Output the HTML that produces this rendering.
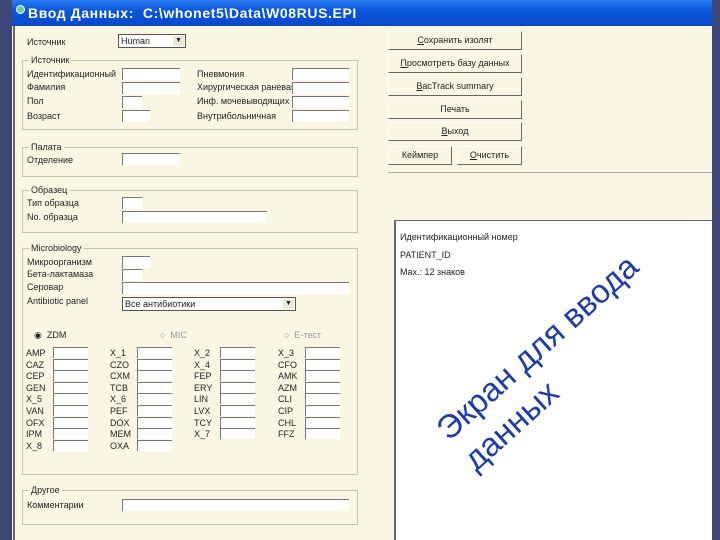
<!DOCTYPE html>
<html><head><meta charset="utf-8"><style>
*{margin:0;padding:0;box-sizing:border-box}
body{width:720px;height:540px;overflow:hidden;background:#3b4676;position:relative;font-family:"Liberation Sans","DejaVu Sans",sans-serif;font-size:9px;color:#222}
.a{position:absolute}
.win{left:12px;top:0;width:700px;height:540px;background:#fbf6e3}
.title{left:12px;top:0;width:700px;height:26px;background:linear-gradient(#2a7bf0,#0a56dc 40%,#0848c8);color:#fff;font-weight:bold;font-size:14px;letter-spacing:0.6px;line-height:26px;padding-left:16px}
.lbl{position:absolute;white-space:nowrap;line-height:10px}
.in{position:absolute;height:12px;background:#fff;border-top:1px solid #777;border-left:1px solid #777}
.grp{position:absolute;border:1px solid #c8c3ad}
.gt{position:absolute;top:-6px;left:6px;background:#fbf6e3;padding:0 2px;line-height:10px}
.btn{position:absolute;height:19px;background:#fbf6e3;border-right:1px solid #666;border-bottom:1px solid #666;border-top:1px solid #fff;border-left:1px solid #fff;text-align:center;line-height:17px;font-size:9px}
</style></head><body>
<div class="a win"></div>
<div class="a" style="left:13px;top:26px;width:2px;height:514px;background:#666"></div>
<div class="a title">Ввод Данных:&nbsp; C:\whonet5\Data\W08RUS.EPI</div>
<div class="a" style="left:16px;top:5px;width:9px;height:9px;border-radius:50%;background:#6c9;border:1px solid #fff"></div>

<div class="lbl" style="left:27px;top:37px">Источник</div>
<div class="in" style="left:118px;top:34px;width:68px;height:14px;border:1px solid #555;padding-left:2px;line-height:12px">Human<span style="position:absolute;right:1px;top:1px;width:11px;height:10px;background:#ece8d8;font-size:7px;text-align:center;line-height:10px">▼</span></div>

<div class="grp" style="left:22px;top:60px;width:336px;height:70px"><span class="gt">Источник</span></div>
<div class="lbl" style="left:27px;top:69px">Идентификационный</div>
<div class="lbl" style="left:27px;top:82px">Фамилия</div>
<div class="lbl" style="left:27px;top:96px">Пол</div>
<div class="lbl" style="left:27px;top:111px">Возраст</div>
<div class="in" style="left:122px;top:68px;width:58px"></div>
<div class="in" style="left:122px;top:82px;width:58px"></div>
<div class="in" style="left:122px;top:96px;width:20px"></div>
<div class="in" style="left:122px;top:110px;width:28px"></div>
<div class="lbl" style="left:197px;top:69px">Пневмония</div>
<div class="lbl" style="left:197px;top:82px">Хирургическая раневая</div>
<div class="lbl" style="left:197px;top:96px">Инф. мочевыводящих</div>
<div class="lbl" style="left:197px;top:111px">Внутрибольничная</div>
<div class="in" style="left:292px;top:68px;width:57px"></div>
<div class="in" style="left:292px;top:82px;width:57px"></div>
<div class="in" style="left:292px;top:96px;width:57px"></div>
<div class="in" style="left:292px;top:110px;width:57px"></div>

<div class="grp" style="left:22px;top:147px;width:336px;height:30px"><span class="gt">Палата</span></div>
<div class="lbl" style="left:27px;top:155px">Отделение</div>
<div class="in" style="left:122px;top:153px;width:58px"></div>

<div class="grp" style="left:22px;top:190px;width:336px;height:43px"><span class="gt">Образец</span></div>
<div class="lbl" style="left:27px;top:198px">Тип образца</div>
<div class="lbl" style="left:27px;top:212px">No. образца</div>
<div class="in" style="left:122px;top:197px;width:20px"></div>
<div class="in" style="left:122px;top:211px;width:145px"></div>

<div class="grp" style="left:22px;top:248px;width:336px;height:227px"><span class="gt">Microbiology</span></div>
<div class="lbl" style="left:27px;top:257px">Микроорганизм</div>
<div class="lbl" style="left:27px;top:269px">Бета-лактамаза</div>
<div class="lbl" style="left:27px;top:282px">Серовар</div>
<div class="lbl" style="left:27px;top:296px">Antibiotic panel</div>
<div class="in" style="left:122px;top:256px;width:28px"></div>
<div class="in" style="left:122px;top:269px;width:20px"></div>
<div class="in" style="left:122px;top:282px;width:227px"></div>
<div class="in" style="left:122px;top:297px;width:174px;height:14px;border:1px solid #555;padding-left:2px;line-height:12px">Все антибиотики<span style="position:absolute;right:1px;top:1px;width:11px;height:10px;background:#ece8d8;font-size:7px;text-align:center;line-height:10px">▼</span></div>
<div class="lbl" style="left:34px;top:330px">◉ &nbsp;ZDM</div>
<div class="lbl" style="left:160px;top:330px;color:#999">○ &nbsp;MIC</div>
<div class="lbl" style="left:284px;top:330px;color:#999">○ &nbsp;E-тест</div>

<div id="grid"></div>

<div class="grp" style="left:22px;top:490px;width:336px;height:35px"><span class="gt">Другое</span></div>
<div class="lbl" style="left:27px;top:500px">Комментарии</div>
<div class="in" style="left:122px;top:499px;width:227px"></div>

<div class="btn" style="left:388px;top:31px;width:134px"><u>С</u>охранить изолят</div>
<div class="btn" style="left:388px;top:54px;width:134px"><u>П</u>росмотреть базу данных</div>
<div class="btn" style="left:388px;top:77px;width:134px"><u>B</u>acTrack summary</div>
<div class="btn" style="left:388px;top:100px;width:134px">Печать</div>
<div class="btn" style="left:388px;top:122px;width:134px"><u>В</u>ыход</div>
<div class="btn" style="left:388px;top:146px;width:64px">Кеймпер</div>
<div class="btn" style="left:457px;top:146px;width:65px"><u>О</u>чистить</div>
<div class="a" style="left:388px;top:172px;width:324px;height:1px;background:#aaa"></div>
<div class="a" style="left:394px;top:220px;width:318px;height:320px;background:#fff;border-left:2px solid #666;border-top:1px solid #666"></div>
<div class="lbl" style="left:400px;top:232px">Идентификационный номер</div>
<div class="lbl" style="left:400px;top:250px">PATIENT_ID</div>
<div class="lbl" style="left:400px;top:267px">Max.: 12 знаков</div>

<svg class="a" style="left:0;top:0" width="720" height="540">
<g fill="#1c3ca8" font-family="Liberation Sans, DejaVu Sans, sans-serif" font-size="33">
<text x="449" y="442" transform="rotate(-42 449 442)">Экран для ввода</text>
<text x="476" y="472" transform="rotate(-42 476 472)">данных</text>
</g></svg>

<script>
var cols=[[26,53,["AMP","CAZ","CEP","GEN","X_5","VAN","OFX","IPM","X_8"]],[110,137,["X_1","CZO","CXM","TCB","X_6","PEF","DOX","MEM","OXA"]],[194,220,["X_2","X_4","FEP","ERY","LIN","LVX","TCY","X_7"]],[278,305,["X_3","CFO","AMK","AZM","CLI","CIP","CHL","FFZ"]]];
var h="";cols.forEach(function(c){c[2].forEach(function(t,i){var y=348+i*11.6;h+='<div class="lbl" style="left:'+c[0]+'px;top:'+y+'px">'+t+'</div><div class="in" style="left:'+c[1]+'px;top:'+(y-1)+'px;width:35px;height:11px"></div>';});});
document.getElementById("grid").outerHTML=h;
</script>
</body></html>
